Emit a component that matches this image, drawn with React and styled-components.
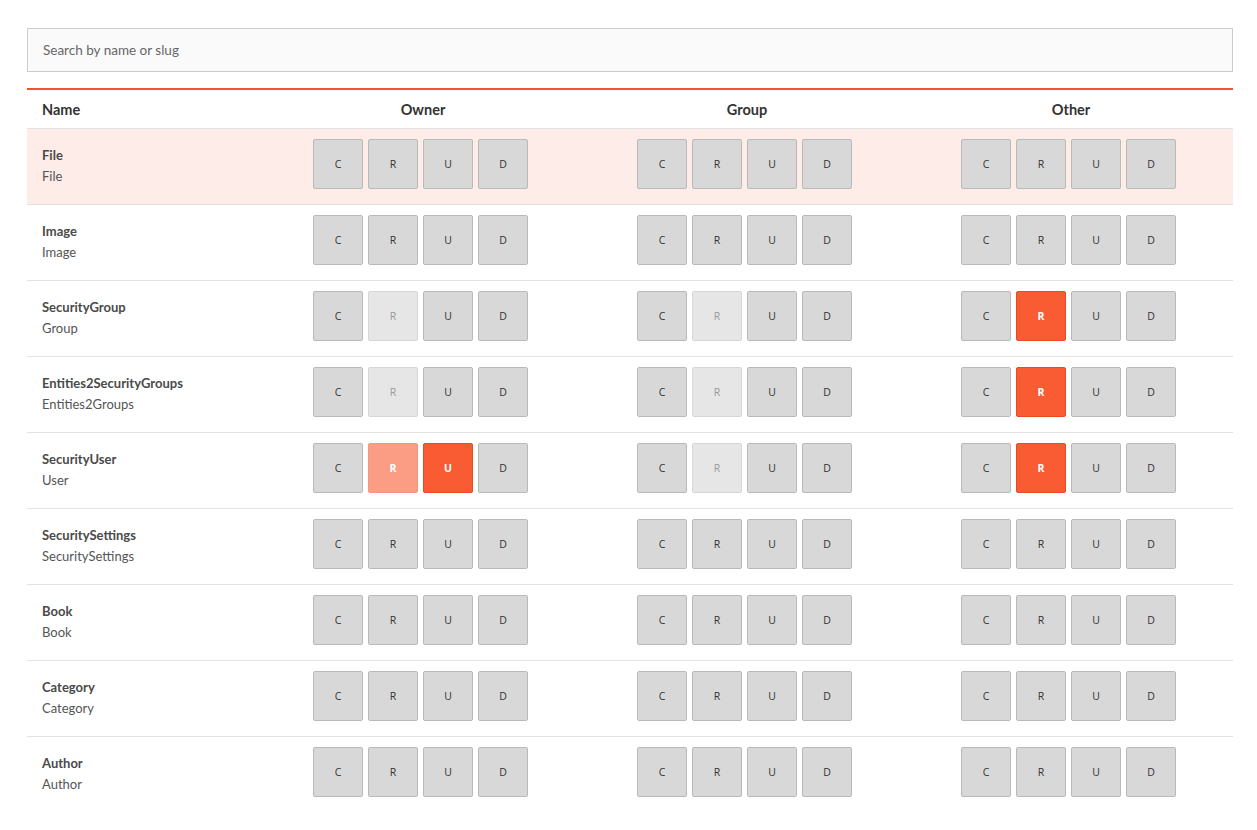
import React from "react";
import styled, { createGlobalStyle } from "styled-components";

const Global = createGlobalStyle`
  html, body { margin: 0; padding: 0; background: #fff; }
  body { font-family: "Lato", "Open Sans", sans-serif; color: #444; }
  * { box-sizing: border-box; }
`;

const Page = styled.div`
  padding: 28px 24px 0 27px;
  width: 1257px;
`;

const Search = styled.input`
  display: block;
  width: 1206px;
  height: 44px;
  border: 1px solid #cccccc;
  background: #fafafa;
  padding: 0 15px 1px;
  font-family: "Lato", sans-serif;
  font-size: 13.5px;
  color: #555;
  outline: none;
  &::placeholder { color: #666; }
`;

const Table = styled.div`
  margin-top: 16px;
  width: 1206px;
  border-top: 2px solid #f4532d;
`;

const Grid = styled.div`
  display: grid;
  grid-template-columns: 234px 324px 324px 324px;
  align-items: center;
  border-bottom: 1px solid #e2e2e2;
  background: ${p => (p.$highlight ? "#fdece8" : "transparent")};
`;

const HeaderRow = styled(Grid)`
  height: 39px;
`;

const HeadCell = styled.div`
  font-weight: 700;
  font-size: 14.5px;
  color: #333;
  padding-left: ${p => (p.$left ? "15px" : "0")};
  text-align: ${p => (p.$left ? "left" : "center")};
  padding-top: 1px;
`;

const Row = styled(Grid)`
  height: 76px;
  padding: 10px 0;
  &:last-child { border-bottom-color: transparent; }
`;

const NameCell = styled.div`
  padding-left: 15px;
  padding-bottom: 2px;
  display: flex;
  flex-direction: column;
  justify-content: center;
  line-height: 21px;
  font-size: 13px;
`;

const Title = styled.span`
  font-weight: 700;
  color: #4a4a4a;
`;

const Slug = styled.span`
  color: #555;
`;

const Buttons = styled.div`
  display: flex;
  justify-content: center;
`;

const palette = {
  off: { bg: "#d8d8d8", border: "#b9b9b9", color: "#333", weight: 400 },
  dim: { bg: "#e6e6e6", border: "#d6d6d6", color: "#999", weight: 400 },
  on: { bg: "#f95b33", border: "#e94a22", color: "#fff", weight: 700 },
  half: { bg: "#fb9d84", border: "#f7937a", color: "#fff", weight: 700 },
};

const Btn = styled.button`
  width: 50px;
  height: 50px;
  margin: 0 5px 5px 0;
  padding: 0;
  border-radius: 2px;
  border: 1px solid ${p => palette[p.$state].border};
  background: ${p => palette[p.$state].bg};
  color: ${p => palette[p.$state].color};
  font-weight: ${p => palette[p.$state].weight};
  font-family: "Open Sans", sans-serif;
  font-size: 10.5px;
  cursor: pointer;
`;

const rows = [
  { t: "File", s: "File", hl: true },
  { t: "Image", s: "Image" },
  { t: "SecurityGroup", s: "Group", st: { o: { R: "dim" }, g: { R: "dim" }, x: { R: "on" } } },
  { t: "Entities2SecurityGroups", s: "Entities2Groups", st: { o: { R: "dim" }, g: { R: "dim" }, x: { R: "on" } } },
  { t: "SecurityUser", s: "User", st: { o: { R: "half", U: "on" }, g: { R: "dim" }, x: { R: "on" } } },
  { t: "SecuritySettings", s: "SecuritySettings" },
  { t: "Book", s: "Book" },
  { t: "Category", s: "Category" },
  { t: "Author", s: "Author" },
];

const letters = ["C", "R", "U", "D"];

function Group({ states = {} }) {
  return (
    <Buttons>
      {letters.map(l => (
        <Btn key={l} $state={states[l] || "off"}>{l}</Btn>
      ))}
    </Buttons>
  );
}

export default function App() {
  return (
    <Page>
      <Global />
      <Search placeholder="Search by name or slug" />
      <Table>
        <HeaderRow>
          <HeadCell $left>Name</HeadCell>
          <HeadCell>Owner</HeadCell>
          <HeadCell>Group</HeadCell>
          <HeadCell>Other</HeadCell>
        </HeaderRow>
        {rows.map(r => (
          <Row key={r.t} $highlight={r.hl}>
            <NameCell>
              <Title>{r.t}</Title>
              <Slug>{r.s}</Slug>
            </NameCell>
            <Group states={r.st && r.st.o} />
            <Group states={r.st && r.st.g} />
            <Group states={r.st && r.st.x} />
          </Row>
        ))}
      </Table>
    </Page>
  );
}
